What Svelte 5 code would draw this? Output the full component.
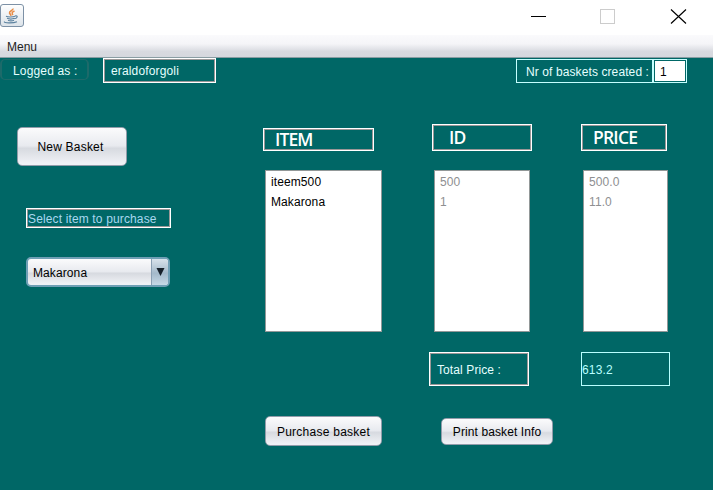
<script>
  const items = [
    { name: 'iteem500', id: '500', price: '500.0' },
    { name: 'Makarona', id: '1', price: '11.0' }
  ];
</script>

<div class="window">
  <header class="titlebar">
    <svg class="java" width="24" height="27" viewBox="0 0 24 27">
      <defs>
        <linearGradient id="tile" x1="0" y1="0" x2="0" y2="1">
          <stop offset="0" stop-color="#fff" /><stop offset="1" stop-color="#dce3e9" />
        </linearGradient>
      </defs>
      <rect x="0.5" y="4.5" width="23" height="22" rx="2.5" fill="url(#tile)" stroke="#7d91a6" />
      <path d="M13 8.500c.5 2-4 2.500-3.500 4.500 .3 1.200 1.800 1.500 1.300 3M14.500 11c-2.500 1-3 2-1.500 4" fill="none" stroke="#e78a43" stroke-width="1.500" />
      <path d="M6 16.300c2 .9 7 .9 9-.1M7 18.300c2 .8 5.500 .8 7.500 0M8 20.200c2 .8 4 .8 6 0M15 16c3.500-.8 2.500 2.500-.5 2.700M4.500 21.500c-1.500 1.800 9 1.900 12.500.2" fill="none" stroke="#5d829f" stroke-width="1.150" />
    </svg>
    <svg class="controls" width="156" height="16" viewBox="0 0 156 16">
      <path d="M0 8.500H15" stroke="#000" />
      <rect x="69.500" y="1.500" width="14" height="14" fill="none" stroke="#ccc" />
      <path d="M140 1.500l15 14M155 1.500l-15 14" stroke="#000" stroke-width="1.150" />
    </svg>
  </header>
  <nav class="menubar"><span>Menu</span></nav>

  <main>
    <div class="status">
      <div class="logged"><span>Logged as :</span></div>
      <div class="etched user"><span>eraldoforgoli</span></div>
      <div class="count-label"><span>Nr of baskets created :</span></div>
      <div class="count"><span>1</span></div>
    </div>

    <div class="content">
      <section class="side">
        <button class="new"><span>New Basket</span></button>
        <div class="etched prompt"><span>Select item to purchase</span></div>
        <div class="combo">
          <span>Makarona</span>
          <i><svg width="9" height="8" viewBox="0 0 9 8"><path d="M.5 0h8l-4 8z" fill="#17202a" /></svg></i>
        </div>
      </section>

      <section class="basket">
        <div class="heads">
          <div class="etched h-item"><span>ITEM</span></div>
          <div class="etched h-id"><span>ID</span></div>
          <div class="etched h-price"><span>PRICE</span></div>
        </div>
        <div class="lists">
          <ul class="names">{#each items as item}<li><span>{item.name}</span></li>{/each}</ul>
          <ul class="ids">{#each items as item}<li><span>{item.id}</span></li>{/each}</ul>
          <ul class="prices">{#each items as item}<li><span>{item.price}</span></li>{/each}</ul>
        </div>
        <div class="totals">
          <div class="etched total-label"><span>Total Price :</span></div>
          <div class="total"><span>613.2</span></div>
        </div>
        <div class="actions">
          <button class="buy"><span>Purchase basket</span></button>
          <button class="print"><span>Print basket Info</span></button>
        </div>
      </section>
    </div>
  </main>
</div>

<style>
  :global(body) { margin: 0; }
  .window, .window * { box-sizing: border-box; }
  .window {
    width: 713px; height: 490px; overflow: hidden;
    display: flex; flex-direction: column;
    background: #006766; color: #e6ffff;
    font: 12px/14px "Liberation Sans", Arial, sans-serif;
    white-space: nowrap;
  }
  svg { display: block; }
  .titlebar { height: 35px; background: #fff; display: flex; justify-content: space-between; padding-right: 26px; }
  .controls { margin-top: 8px; }
  .menubar {
    height: 23px; padding: 5px 0 0 7px; color: #222;
    background: linear-gradient(#fafafc, #f5f5f8 40%, #d8dae0 75%, #d5d8de);
    border-bottom: 1px solid #8a9da3;
    letter-spacing: 0;
  }
  .status { display: flex; height: 26px; align-items: flex-start; }
  .etched { border: 1px solid #fff; outline: 1px solid #9a9797; outline-offset: -2px; }
  .logged { width: 89px; height: 21px; margin-top: 1px; padding: 4px 0 0 11px; border: 1px solid #1d6a6a; border-width: 1px 2px; border-radius: 5px; letter-spacing: .16px; }
  .user { width: 113px; height: 25px; margin-left: 14px; padding: 5px 0 0 7px; letter-spacing: .15px; margin-right: 300px; }
  .count-label { width: 137px; height: 24px; margin-top: 1px; border: 1px solid #c6ffff; padding: 5px 0 0 9px; letter-spacing: .1px; }
  .count { width: 34px; height: 24px; margin-top: 1px; border: 1px solid #c6ffff; padding: 5px 0 0 6px; color: #000; background: #fff; outline: 1px solid #006766; outline-offset: -2px; }
  .content { display: flex; }
  .side { width: 263px; padding: 43px 0 0 17px; }
  button, .combo {
    font: inherit; color: #000; margin: 0; padding: 0; border: 1px solid #929caa; border-radius: 5px;
    background: linear-gradient(#fbfbfc, #e8eaef 48%, #d7dae0 55%, #eff1f5 95%);
    display: flex; align-items: center; justify-content: center;
  }
  .new { width: 110px; height: 39px; padding-right: 3px; letter-spacing: .2px; }
  .prompt { width: 145px; height: 20px; margin: 42px 0 0 9px; padding: 3px 0 0 1px; color: #a9d8f0; letter-spacing: .14px; }
  .combo { width: 144px; height: 30px; margin: 29px 0 0 9px; padding-left: 5px; justify-content: space-between; border: 2px solid #6f9fb5; overflow: hidden; letter-spacing: .1px; }
  .combo > span { padding-top: 1px; }
  .combo i { width: 17px; height: 100%; border-left: 1px solid #8ba0b4; background: linear-gradient(#d8e2eb, #a4b9ca 55%, #c6d9e7); display: flex; align-items: center; justify-content: center; }
  .heads { display: flex; padding-top: 40px; align-items: flex-end; height: 67px; }
  .heads .etched { height: 27px; font: 600 17.500px/20px "Open Sans", sans-serif; color: #fff; }
  .heads .h-item { width: 111px; height: 23px; padding: 0 0 0 11px; margin-right: 58px; letter-spacing: -.9px; }
  .heads .h-id { width: 100px; padding: 2px 0 0 16px; margin-right: 49px; letter-spacing: -.9px; }
  .heads .h-price { width: 86px; padding: 2px 0 0 11px; letter-spacing: -.8px; }
  .lists { display: flex; gap: 52px; margin: 19px 0 0 2px; }
  ul { list-style: none; margin: 0; height: 162px; background: #fff; border: 1px solid #929898; padding: 1px 0 0 5px; color: #8e8f91; letter-spacing: .1px; }
  li { height: 20px; line-height: 20px; }
  .names { width: 117px; color: #000; }
  .ids { width: 96px; }
  .prices { width: 85px; }
  .prices { margin-left: 1px; }
  .totals { display: flex; margin: 20px 0 0 166px; }
  .total-label { width: 100px; height: 34px; padding: 10px 0 0 7px; letter-spacing: .1px; }
  .total { width: 89px; height: 34px; margin-left: 52px; padding: 10px 0 0; border: 1px solid #b9ffff; color: #b9ffff; letter-spacing: .15px; }
  .actions { display: flex; align-items: center; gap: 59px; margin: 30px 0 0 2px; }
  .buy { width: 117px; height: 30px; padding-top: 1px; letter-spacing: .25px; }
  .print { width: 112px; height: 27px; padding-top: 1px; letter-spacing: .1px; }
</style>
